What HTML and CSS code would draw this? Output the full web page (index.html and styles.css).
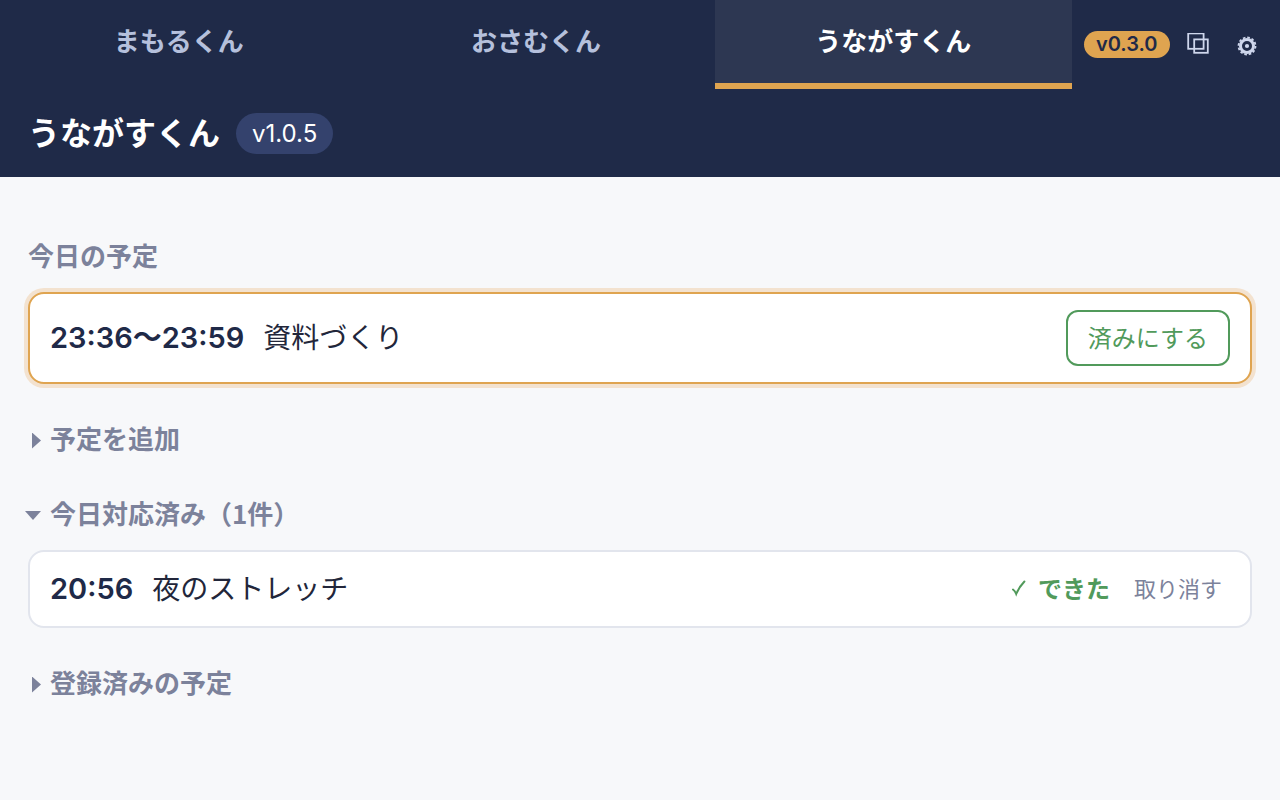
FILE: index.html
```html
<!DOCTYPE html>
<html lang="ja">
<head>
    <meta charset="UTF-8">
    <meta name="viewport" content="width=device-width, initial-scale=1.0">
    <title>うながすくん</title>
    <link rel="stylesheet" href="styles.css">
</head>
<body>

    <nav class="tabbar">
        <button class="tab">まもるくん</button>
        <button class="tab">おさむくん</button>
        <button class="tab active">うながすくん</button>
        <div class="tools">
            <span class="app-version">v0.3.0</span>
            <button class="icon-btn" aria-label="ウィンドウ">
                <svg width="24" height="24" viewBox="0 0 24 24" fill="none" stroke="currentColor" stroke-width="1.8">
                    <rect x="2.2" y="0.4" width="15.4" height="15.4"/>
                    <rect x="8.2" y="6.4" width="13.6" height="13.4"/>
                </svg>
            </button>
            <button class="icon-btn gear" aria-label="設定">
                <svg width="20" height="20" viewBox="0 0 20 20" fill="none" stroke="currentColor">
                    <circle cx="10" cy="10" r="6.5" stroke-width="3"/>
                    <circle cx="10" cy="10" r="8.5" stroke-width="1.8" stroke-dasharray="2.6 1.85"/>
                    <circle cx="10" cy="10" r="2.1" fill="currentColor" stroke="none"/>
                </svg>
            </button>
        </div>
    </nav>

    <header class="header">
        <h1>うながすくん</h1>
        <span class="version">v1.0.5</span>
    </header>

    <main>
        <section>
            <h2>今日の予定</h2>
            <div class="card current">
                <span class="time">23:36〜23:59</span>
                <span class="name">資料づくり</span>
                <button class="done-btn">済みにする</button>
            </div>
        </section>

        <details>
            <summary>予定を追加</summary>
        </details>

        <details open>
            <summary>今日対応済み（1件）</summary>
            <div class="card">
                <span class="time">20:56</span>
                <span class="name">夜のストレッチ</span>
                <span class="status">
                    <svg width="16" height="20" viewBox="0 0 16 20" fill="none" stroke="currentColor" stroke-width="2" stroke-linecap="round">
                        <path d="M3 12.5 C4.3 13.4 5.4 15 6.2 17 C8.2 12 11 8 14.4 4.5"/>
                    </svg>
                    できた
                </span>
                <button class="undo-btn">取り消す</button>
            </div>
        </details>

        <details>
            <summary>登録済みの予定</summary>
        </details>
    </main>

</body>
</html>
```
FILE: styles.css
```css
* {
    box-sizing: border-box;
}

body {
    margin: 0;
    background-color: #f7f8fa;
    color: #22263a;
    font-family: Inter, "Noto Sans CJK JP", sans-serif;
    font-size: 28px;
}

button {
    font-family: inherit;
    background: none;
    border: none;
    padding: 0;
    cursor: pointer;
}

/* Tabs */
.tabbar {
    display: flex;
    height: 89px;
    background-color: #1f2a48;
}

.tab {
    flex: 1;
    padding-bottom: 4px;
    border-bottom: 6px solid transparent;
    color: #b5c0dc;
    font-size: 26px;
    font-weight: 700;
}

.tab.active {
    background-color: #2d3752;
    border-bottom-color: #dfa450;
    color: #fff;
}

.tools {
    display: flex;
    align-items: center;
    gap: 16px;
    width: 208px;
    padding: 0 12px;
}

.app-version {
    padding: 0 12px;
    border-radius: 14px;
    background-color: #dfa450;
    color: #1f2a48;
    font-size: 20px;
    font-weight: 600;
    line-height: 27px;
}

.icon-btn {
    display: flex;
    color: #ced6ec;
}

.gear {
    margin-left: auto;
    padding: 2px 11px 0 0;
}

/* Header */
.header {
    display: flex;
    align-items: center;
    gap: 16px;
    height: 88px;
    padding: 0 28px;
    background-color: #1f2a48;
    color: #fff;
}

h1 {
    margin: 0;
    padding-bottom: 4px;
    font-size: 32px;
    font-weight: 700;
}

.version {
    padding: 0 16px;
    border-radius: 21px;
    background-color: #34426d;
    font-size: 24px;
    line-height: 41px;
}

/* Content */
main {
    display: flex;
    flex-direction: column;
    gap: 36px;
    padding: 60px 28px;
}

h2,
summary {
    margin: 0;
    padding-bottom: 4px;
    color: #7c829b;
    font-family: "Noto Sans CJK JP", sans-serif;
    font-size: 26px;
    font-weight: 700;
    line-height: 35px;
}

summary {
    display: flex;
    align-items: center;
    gap: 9px;
    cursor: pointer;
}

summary::before {
    content: "";
    width: 9px;
    height: 16px;
    margin: 6px 0 0 4px;
    background-color: currentColor;
    clip-path: polygon(0 0, 100% 50%, 0 100%);
}

details[open] summary::before {
    width: 16px;
    height: 9px;
    margin-left: -3px;
    clip-path: polygon(0 0, 100% 0, 50% 100%);
}

.card {
    display: flex;
    align-items: center;
    gap: 19px;
    min-height: 78px;
    margin-top: 16px;
    padding: 16px 20px;
    border: 2px solid #e2e5ed;
    border-radius: 16px;
    background-color: #fff;
}

.card.current {
    border-color: #dfa450;
    box-shadow: 0 0 0 4px #f3e2cf;
}

.time {
    color: #1f2a48;
    font-size: 29px;
    font-weight: 600;
    line-height: 42px;
}

.name {
    flex: 1;
    line-height: 42px;
}

.done-btn {
    height: 56px;
    padding: 0 20px 4px;
    border: 2px solid #519a5b;
    border-radius: 12px;
    color: #519a5b;
    font-size: 24px;
}

.status {
    display: flex;
    align-items: center;
    gap: 12px;
    padding-bottom: 4px;
    color: #519a5b;
    font-size: 24px;
    font-weight: 700;
}

.undo-btn {
    padding: 0 8px 4px 5px;
    color: #7c829b;
    font-size: 22px;
}
```
